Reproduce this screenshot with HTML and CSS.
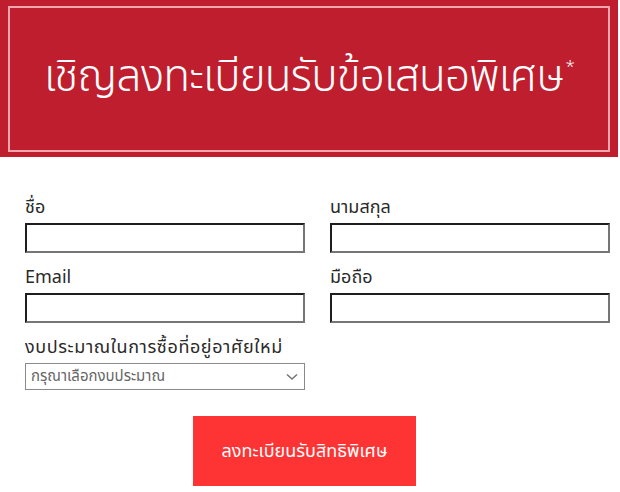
FILE: index.html
```html
<!DOCTYPE html>
<html>
    <head>
        <meta charset="utf-8" />
        <title>ลงทะเบียนรับข้อเสนอพิเศษ</title>
        <link rel="stylesheet" href="styles.css">
    </head>
    <body>
        <div class="banner">
            <div class="banner-frame">
                <h1>เชิญลงทะเบียนรับข้อเสนอพิเศษ<sup>*</sup></h1>
            </div>
        </div>

        <form class="register">
            <div class="grid">
                <div class="field">
                    <label>ชื่อ</label>
                    <input type="text" class="box" />
                </div>
                <div class="field">
                    <label>นามสกุล</label>
                    <input type="text" class="box" />
                </div>
                <div class="field">
                    <label>Email</label>
                    <input type="text" class="box" />
                </div>
                <div class="field">
                    <label>มือถือ</label>
                    <input type="text" class="box" />
                </div>
                <div class="field">
                    <label class="thai-wide">งบประมาณในการซื้อที่อยู่อาศัยใหม่</label>
                    <div class="select-wrap">
                        <select class="budget">
                            <option>กรุณาเลือกงบประมาณ</option>
                        </select>
                        <svg class="chevron" width="12" height="8" viewBox="0 0 12 8">
                            <path d="M1 1.5 L6 6 L11 1.5" fill="none" stroke="#777" stroke-width="1.6" />
                        </svg>
                    </div>
                </div>
            </div>

            <div class="actions">
                <button type="button" class="submit">ลงทะเบียนรับสิทธิพิเศษ</button>
            </div>
        </form>
    </body>
</html>
```

FILE: styles.css
```css
body {
	margin: 0;
	background: #fff;
	font-family: "Noto Sans Thai", "Noto Sans", "DejaVu Sans", sans-serif;
}

.banner {
	width: 618px;
	height: 157px;
	background: #be1e2d;
	padding: 6px 8px 5px 8px;
	box-sizing: border-box;
}

.banner-frame {
	height: 100%;
	border: 2px solid #f1a6ae;
	box-sizing: border-box;
	display: flex;
	align-items: center;
	justify-content: center;
}

.banner h1 {
	margin: 0;
	color: #fff;
	font-weight: 300;
	font-size: 44px;
	letter-spacing: -0.8px;
	line-height: 1.2;
	padding-bottom: 2px;
}

.banner sup {
	font-size: 17px;
	vertical-align: 1.1em;
	line-height: 0;
	margin-left: 2px;
}

.register {
	padding: 39px 0 0 25px;
	width: 585px;
}

.grid {
	display: grid;
	grid-template-columns: 280px 280px;
	column-gap: 25px;
	row-gap: 13px;
}

.field label {
	display: block;
	height: 27px;
	line-height: 24px;
	font-size: 18px;
	color: #2a2a2a;
	white-space: nowrap;
}

.field .thai-wide {
	letter-spacing: 0.6px;
}

.box {
	display: block;
	width: 280px;
	height: 30px;
	box-sizing: border-box;
	margin: 0;
	border-style: solid;
	border-width: 2px;
	border-color: #1e1e1e #767676 #767676 #1e1e1e;
	background: #fff;
}

.select-wrap {
	position: relative;
	width: 280px;
}

.budget {
	display: block;
	width: 280px;
	height: 27px;
	margin: 0;
	padding: 0 5px;
	border: 1px solid #8a8a8a;
	background: #fff;
	color: #666;
	font-family: inherit;
	font-size: 15px;
	appearance: none;
	-webkit-appearance: none;
	border-radius: 0;
}

.chevron {
	position: absolute;
	right: 7px;
	top: 10px;
}

.actions {
	display: flex;
	padding-top: 26px;
	padding-left: 168px;
}

.submit {
	width: 223px;
	height: 70px;
	border: 0;
	background: #fe3333;
	color: #fff;
	font-family: inherit;
	font-size: 18px;
	cursor: pointer;
}
```
